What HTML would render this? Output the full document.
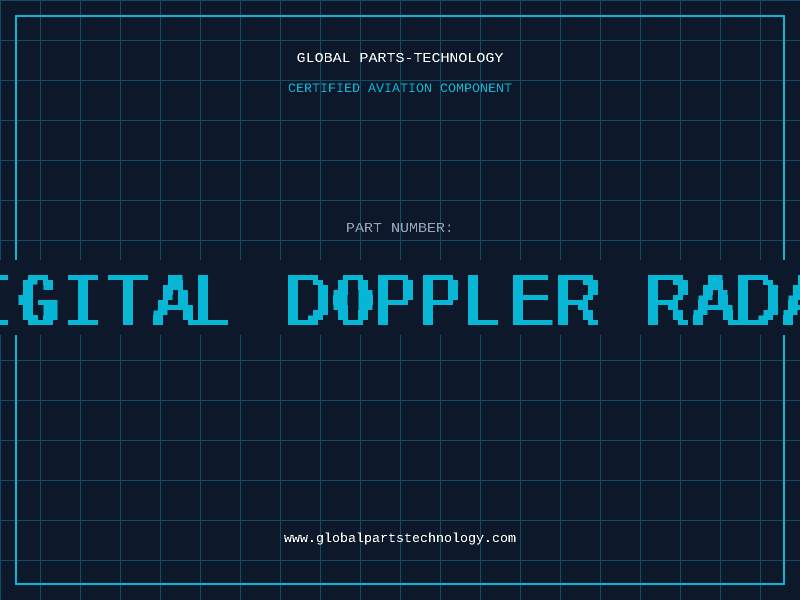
<!DOCTYPE html>
<html lang="en">
<head>
<meta charset="utf-8">
<title>Global Parts-Technology</title>
<style>
html,body{margin:0;padding:0;width:800px;height:600px;overflow:hidden;background:#0e182b}
svg{display:block}
text{font-family:"Liberation Mono",monospace;text-anchor:middle}
text.big{font-family:"Liberation Sans",sans-serif;text-anchor:start}
tspan.m{font-family:"Liberation Mono",monospace;font-size:75px}
</style>
</head>
<body>
<svg width="800" height="600" viewBox="0 0 800 600" xmlns="http://www.w3.org/2000/svg">
<defs>
<pattern id="g" width="40" height="40" patternUnits="userSpaceOnUse">
<rect x="0" y="0" width="40" height="1" fill="#0e4f66"/>
<rect x="0" y="0" width="1" height="40" fill="#0e4f66"/>
</pattern>
<filter id="px" filterUnits="userSpaceOnUse" primitiveUnits="userSpaceOnUse" x="-2" y="260" width="805" height="75" color-interpolation-filters="sRGB">
<feMorphology in="SourceGraphic" operator="dilate" radius="2 0" result="s"/>
<feFlood x="0" y="262" width="1" height="1" flood-color="#000"/>
<feComposite x="-2" y="260" width="5" height="5"/>
<feTile x="-2" y="260" width="805" height="75" result="a"/>
<feComposite in="s" in2="a" operator="in"/>
<feComponentTransfer><feFuncA type="discrete" tableValues="0 1"/></feComponentTransfer>
<feMorphology operator="dilate" radius="2"/>
</filter>
<filter id="crisp" filterUnits="userSpaceOnUse" x="0" y="0" width="800" height="600" color-interpolation-filters="sRGB">
<feComponentTransfer><feFuncA type="discrete" tableValues="0 1"/></feComponentTransfer>
</filter>
</defs>
<rect width="800" height="600" fill="#0e182b"/>
<rect width="800" height="600" fill="url(#g)"/>
<rect x="16" y="16" width="768" height="568" fill="none" stroke="#06b6d4" stroke-width="2"/>
<rect x="0" y="260" width="800" height="75" fill="#0e182b"/>
<g filter="url(#crisp)">
<text transform="translate(400 62) scale(1 .95)" font-size="15" fill="#ffffff">GLOBAL PARTS-TECHNOLOGY</text>
<text transform="translate(400 92) scale(1 .95)" font-size="13.33" fill="#06b6d4">CERTIFIED AVIATION COMPONENT</text>
<text transform="translate(400 232) scale(1 .95)" font-size="15" fill="#94a3b8">PART NUMBER:</text>
<text transform="translate(400 542) scale(1 .95)" font-size="13.33" fill="#ffffff">www.globalpartstechnology.com</text>
</g>
<g filter="url(#px)">
<text class="big" transform="translate(0 325) scale(.85 1)" font-size="73" fill="#06b6d4"><tspan x="-88.6">D</tspan><tspan class="m" x="-30.6 22.4 75.3">IGI</tspan><tspan x="128.2 180.4 229.1 282 334.9">TAL D</tspan><tspan class="m" x="392.9">O</tspan><tspan x="440.8 493.8 546.7 599.6 652.6 706 758.5 815.6 864.4 921.5 970.2">PPLER RADAR</tspan></text>
</g>
</svg>
</body>
</html>
